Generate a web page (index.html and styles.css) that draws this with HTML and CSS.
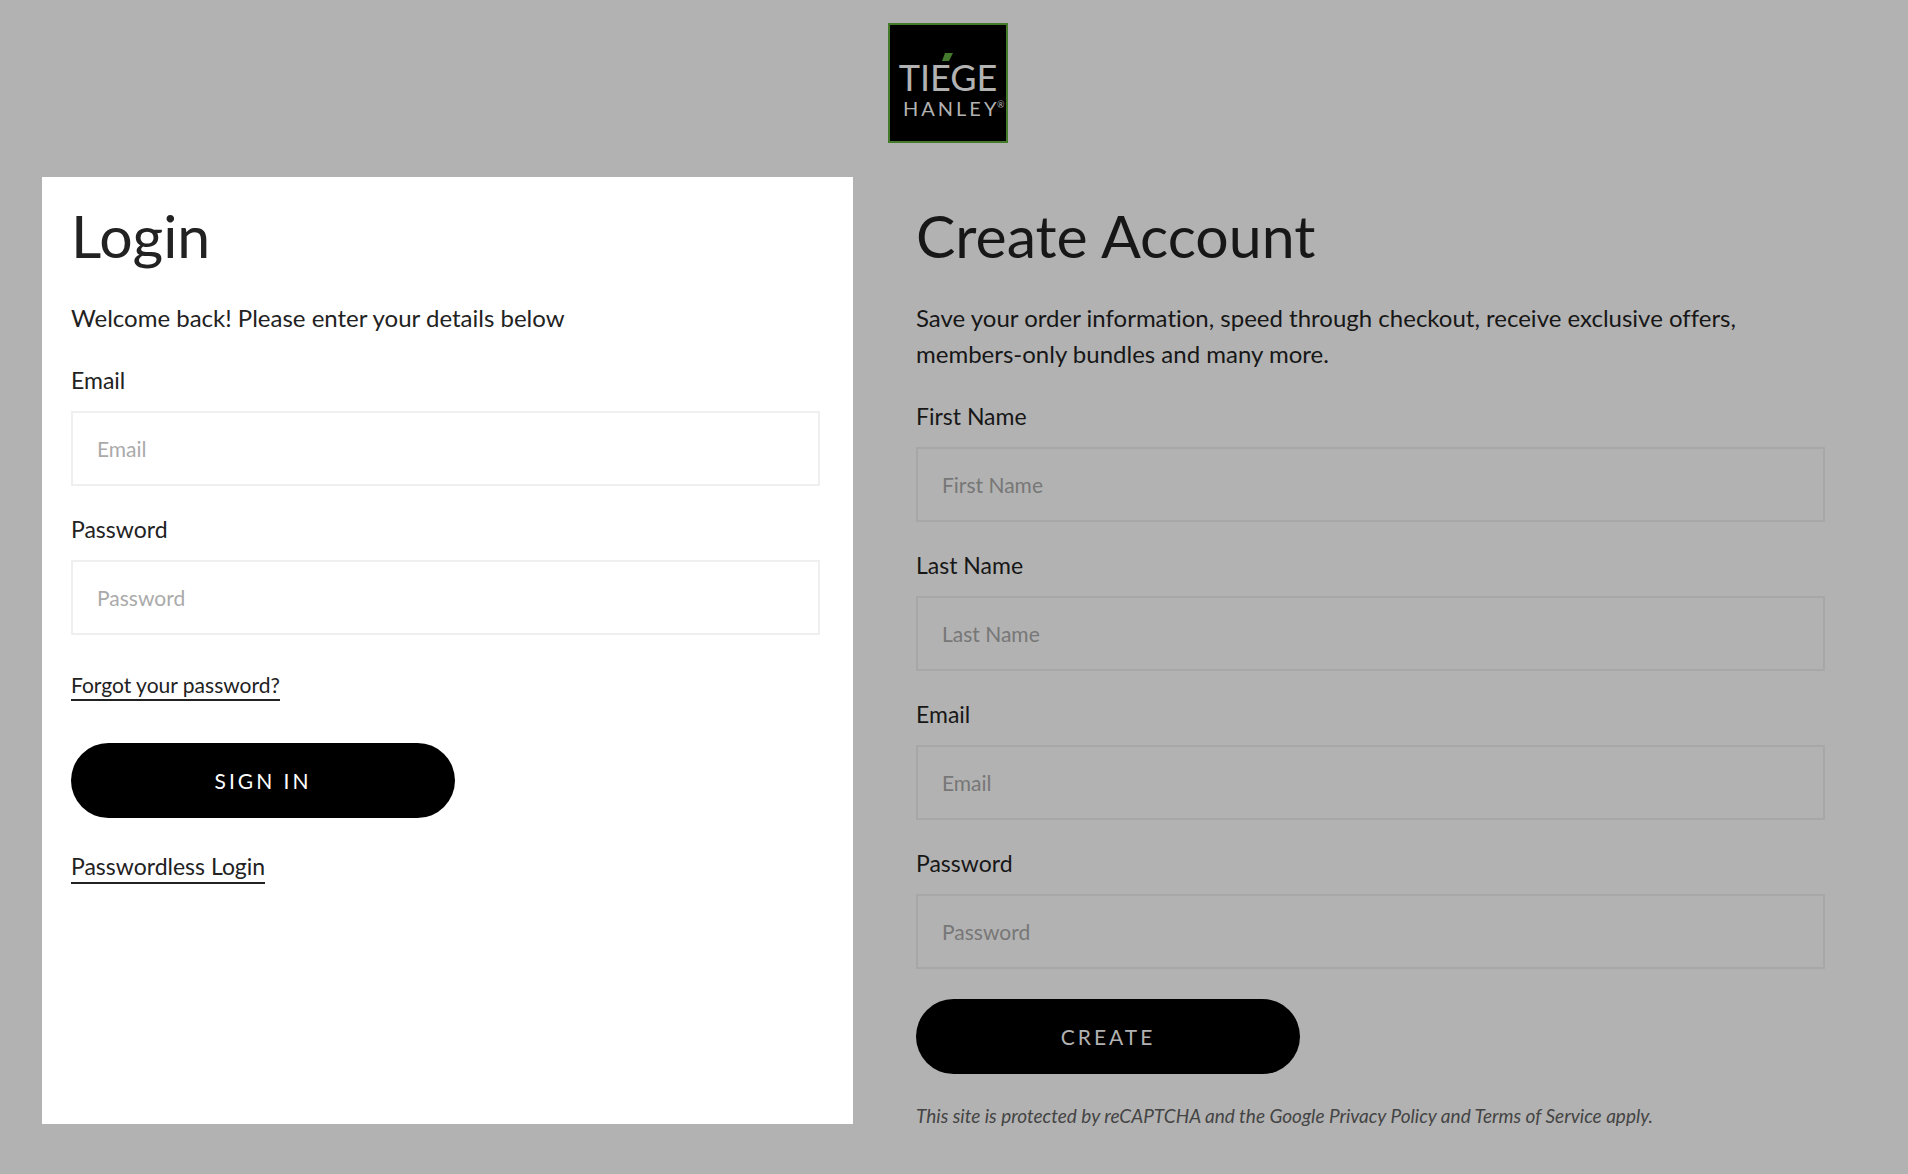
FILE: index.html
```html
<!DOCTYPE html>
<html lang="en">
<head>
<meta charset="utf-8">
<meta name="viewport" content="width=device-width, initial-scale=1">
<title>Login – Tiége Hanley</title>
<link rel="stylesheet" href="styles.css">
</head>
<body>
<header class="site-header">
  <a class="logo" href="#" aria-label="Tiége Hanley home">
    <svg width="120" height="120" viewBox="0 0 120 120">
      <rect x="1" y="1" width="118" height="118" fill="#000" stroke="#437a2c" stroke-width="2"/>
      <text class="logo-top" x="60" y="68" text-anchor="middle">TIÉGE</text>
      <path d="M46 20h26v21H46z" fill="#000"/>
      <path d="M57 30h8l-4 8h-7z" fill="#437a2c"/>
      <text class="logo-bottom" x="15" y="93">HANLEY</text>
      <text class="logo-mark" x="109" y="85">®</text>
    </svg>
  </a>
</header>
<main class="account">
  <section class="panel login">
    <h1 class="title">Login</h1>
    <p class="intro">Welcome back! Please enter your details below</p>
    <form class="form">
      <div class="field">
        <label for="login-email">Email</label>
        <input id="login-email" type="email" placeholder="Email">
      </div>
      <div class="field">
        <label for="login-password">Password</label>
        <input id="login-password" type="password" placeholder="Password">
      </div>
      <a class="link forgot" href="#">Forgot your password?</a>
      <button class="button" type="submit">SIGN IN</button>
      <a class="link passwordless" href="#">Passwordless Login</a>
    </form>
  </section>
  <section class="panel create">
    <h1 class="title">Create Account</h1>
    <p class="intro">Save your order information, speed through checkout, receive exclusive offers, members-only bundles and many more.</p>
    <form class="form">
      <div class="field">
        <label for="first-name">First Name</label>
        <input id="first-name" type="text" placeholder="First Name">
      </div>
      <div class="field">
        <label for="last-name">Last Name</label>
        <input id="last-name" type="text" placeholder="Last Name">
      </div>
      <div class="field">
        <label for="new-email">Email</label>
        <input id="new-email" type="email" placeholder="Email">
      </div>
      <div class="field">
        <label for="new-password">Password</label>
        <input id="new-password" type="password" placeholder="Password">
      </div>
      <button class="button" type="submit">CREATE</button>
      <p class="note">This site is protected by reCAPTCHA and the Google <a href="#">Privacy Policy</a> and <a href="#">Terms of Service</a> apply.</p>
    </form>
  </section>
</main>
</body>
</html>
```

FILE: styles.css
```css
* {
  box-sizing: border-box;
}

body {
  margin: 0;
  background: #b2b2b2;
  font-family: Lato, sans-serif;
  font-variant-ligatures: no-common-ligatures;
  color: #222;
}

.site-header {
  display: flex;
  justify-content: center;
  padding: 23px 12px 34px 0;
}

.logo,
.logo svg {
  display: block;
}

.logo text {
  fill: #b2b2b2;
}

.logo .logo-top {
  font-size: 36px;
}

.logo .logo-bottom {
  font-size: 20px;
  letter-spacing: 3px;
}

.logo .logo-mark {
  font-size: 9px;
}

.account {
  display: grid;
  grid-template-columns: 811fr 909fr;
  gap: 63px;
  padding: 0 83px 46px 42px;
}

.panel {
  padding-top: 23px;
}

.login {
  margin-bottom: 4px;
  padding-left: 29px;
  padding-right: 33px;
  background: #fff;
}

.title {
  margin: 0 0 28px;
  font-size: 59px;
  font-weight: 400;
  line-height: 72px;
}

.intro {
  margin: 0 0 26px;
  font-size: 24px;
  line-height: 36px;
}

.form {
  display: flex;
  flex-direction: column;
  align-items: flex-start;
}

.field {
  display: flex;
  flex-direction: column;
  gap: 13px;
  width: 100%;
}

.field + .field {
  margin-top: 25px;
}

.field label {
  font-size: 23px;
  line-height: 36px;
}

.field input {
  width: 100%;
  height: 75px;
  padding: 0 24px;
  border: 2px solid #efefef;
  border-radius: 0;
  background: transparent;
  font: inherit;
  font-size: 21px;
  color: inherit;
}

.field input::placeholder {
  color: #aaa;
  opacity: 1;
}

.button {
  width: 384px;
  max-width: 100%;
  height: 75px;
  border: 0;
  border-radius: 38px;
  background: #000;
  color: #fff;
  font: inherit;
  font-size: 21px;
  letter-spacing: 3px;
}

.link {
  border-bottom: 2px solid #222;
  color: inherit;
  text-decoration: none;
}

.forgot {
  margin: 36px 0 42px;
  font-size: 21px;
  line-height: 28px;
}

.passwordless {
  margin-top: 32px;
  font-size: 23px;
  line-height: 32px;
}

.create {
  color: #171717;
}

.create .field input {
  border-color: #a7a7a7;
}

.create .field input::placeholder {
  color: #777;
}

.create .button {
  margin-top: 30px;
  color: #b2b2b2;
}

.note {
  margin: 30px 0 0;
  font-size: 19px;
  font-style: italic;
  line-height: 24px;
  color: #444;
}

.note a {
  color: inherit;
  text-decoration: none;
}
```
